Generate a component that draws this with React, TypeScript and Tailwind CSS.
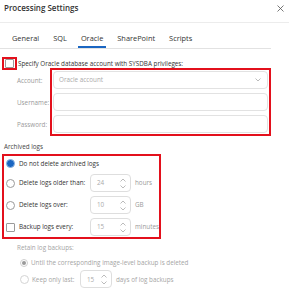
// Processing settings dialog, Oracle tab
import React from 'react';

const tabs = ['General', 'SQL', 'Oracle', 'SharePoint', 'Scripts'];

const Spinner: React.FC = () => (
  <div className="flex flex-col items-center justify-center gap-[3px] mr-[4px]">
    <svg width="6" height="4" viewBox="0 0 6 4" fill="none">
      <path d="M0.5 3.5L3 1L5.5 3.5" stroke="#aaa" strokeWidth="0.8" />
    </svg>
    <svg width="6" height="4" viewBox="0 0 6 4" fill="none">
      <path d="M0.5 0.5L3 3L5.5 0.5" stroke="#aaa" strokeWidth="0.8" />
    </svg>
  </div>
);

const NumberBox: React.FC<{ value: string; w?: string }> = ({ value, w = 'w-[41px]' }) => (
  <div
    className={`${w} h-[18px] shrink-0 border border-[#dedede] rounded-[4px] flex items-center justify-between pl-[6px] text-[#aaa]`}
  >
    <span>{value}</span>
    <Spinner />
  </div>
);

const Radio: React.FC<{ checked?: boolean; disabled?: boolean }> = ({ checked, disabled }) => {
  if (checked && disabled) {
    return (
      <span className="w-[8px] h-[8px] shrink-0 rounded-full border border-[#cfcfcf] flex items-center justify-center">
        <span className="w-[4px] h-[4px] rounded-full bg-[#9a9a9a]" />
      </span>
    );
  }
  if (checked) {
    return (
      <span className="w-[9px] h-[9px] shrink-0 rounded-full border border-[#8db4e0] bg-[#1a66c2]" />
    );
  }
  return (
    <span
      className={`w-[9px] h-[9px] shrink-0 rounded-full border ${disabled ? 'border-[#d4d4d4]' : 'border-[#9a9a9a]'}`}
    />
  );
};

const Checkbox: React.FC = () => (
  <span className="w-[9px] h-[9px] shrink-0 rounded-[1px] border border-[#9a9a9a] bg-white" />
);

const App: React.FC = () => {
  return (
    <div
      className="w-[289px] h-[299px] bg-white overflow-hidden text-[6.3px] text-[#333] whitespace-nowrap"
      style={{ fontFamily: '"Open Sans", "Liberation Sans", sans-serif' }}
    >
      {/* Header */}
      <div className="h-[23px] flex items-start justify-between pl-[4px] pr-[5px] pt-[3px] border-b border-[#ececec]">
        <span className="text-[8px] font-semibold leading-[10px] text-[#333]">Processing Settings</span>
        <svg width="7" height="7" viewBox="0 0 7 7" className="mt-[2px]">
          <path d="M0.5 0.5L6.5 6.5M6.5 0.5L0.5 6.5" stroke="#555" strokeWidth="0.8" />
        </svg>
      </div>

      {/* Tabs */}
      <div className="w-[271px] flex pl-[9px] gap-[8px] border-b border-[#e2e2e2]">
        {tabs.map((t) => (
          <div
            key={t}
            className={`px-[3px] pt-[11px] pb-[3px] leading-[9px] text-[7.4px] border-b-2 ${
              t === 'Oracle' ? 'border-[#1a66c2]' : 'border-transparent'
            }`}
          >
            {t}
          </div>
        ))}
      </div>

      {/* Specify account */}
      <div className="flex items-center mt-[8px] pl-[2px]">
        <div className="w-[15px] h-[13px] border-2 border-[#e3101c] flex items-center justify-center">
          <Checkbox />
        </div>
        <span className="ml-[1px]">Specify Oracle database account with SYSDBA privileges:</span>
      </div>

      <div className="flex -mt-[2px]">
        <div className="w-[50px] pl-[17px] pt-[4px] flex flex-col gap-[4px] text-[#9a9a9a]">
          <div className="h-[18px] flex items-center">Account:</div>
          <div className="h-[18px] flex items-center">Username:</div>
          <div className="h-[18px] flex items-center">Password:</div>
        </div>
        <div className="w-[221px] border-2 border-[#e3101c] p-[1px] flex flex-col gap-[4px]">
          <div className="h-[18px] border border-[#e2e2e2] rounded-[4px] flex items-center justify-between pl-[5px] pr-[6px] text-[#aaa]">
            <span>Oracle account</span>
            <svg width="6" height="4" viewBox="0 0 6 4" fill="none">
              <path d="M0.5 0.5L3 3L5.5 0.5" stroke="#aaa" strokeWidth="0.8" />
            </svg>
          </div>
          <div className="h-[18px] border border-[#e2e2e2] rounded-[4px]" />
          <div className="h-[18px] border border-[#e2e2e2] rounded-[4px]" />
        </div>
      </div>

      {/* Archived logs */}
      <div className="pl-[4px] mt-[6px] leading-[9px] text-[#444]">Archived logs</div>

      <div className="ml-[2px] mt-[3px] w-[159px] border-2 border-[#e3101c] pl-[2px] pt-[1px] pb-[1px] flex flex-col gap-[4px]">
        <div className="h-[13px] flex items-center">
          <Radio checked />
          <span className="ml-[4px]">Do not delete archived logs</span>
        </div>
        <div className="h-[18px] flex items-center">
          <Radio />
          <span className="ml-[4px] w-[71px]">Delete logs older than:</span>
          <NumberBox value="24" />
          <span className="ml-[4px] text-[#9a9a9a]">hours</span>
        </div>
        <div className="h-[18px] flex items-center">
          <Radio />
          <span className="ml-[4px] w-[71px]">Delete logs over:</span>
          <NumberBox value="10" />
          <span className="ml-[4px] text-[#9a9a9a]">GB</span>
        </div>
        <div className="h-[18px] flex items-center">
          <Checkbox />
          <span className="ml-[4px] w-[71px]">Backup logs every:</span>
          <NumberBox value="15" />
          <span className="ml-[4px] text-[#9a9a9a]">minutes</span>
        </div>
      </div>

      {/* Retain log backups */}
      <div className="pl-[17px] mt-[4px] leading-[9px] text-[#a5a5a5]">Retain log backups:</div>
      <div className="pl-[20px] mt-[6px] flex items-center text-[#a5a5a5]">
        <Radio checked disabled />
        <span className="ml-[3px]">Until the corresponding image-level backup is deleted</span>
      </div>
      <div className="pl-[20px] mt-[3px] flex items-center text-[#a5a5a5]">
        <Radio disabled />
        <span className="ml-[3px] w-[48px]">Keep only last:</span>
        <NumberBox value="15" w="w-[32px]" />
        <span className="ml-[4px]">days of log backups</span>
      </div>
    </div>
  );
};

export default App;
